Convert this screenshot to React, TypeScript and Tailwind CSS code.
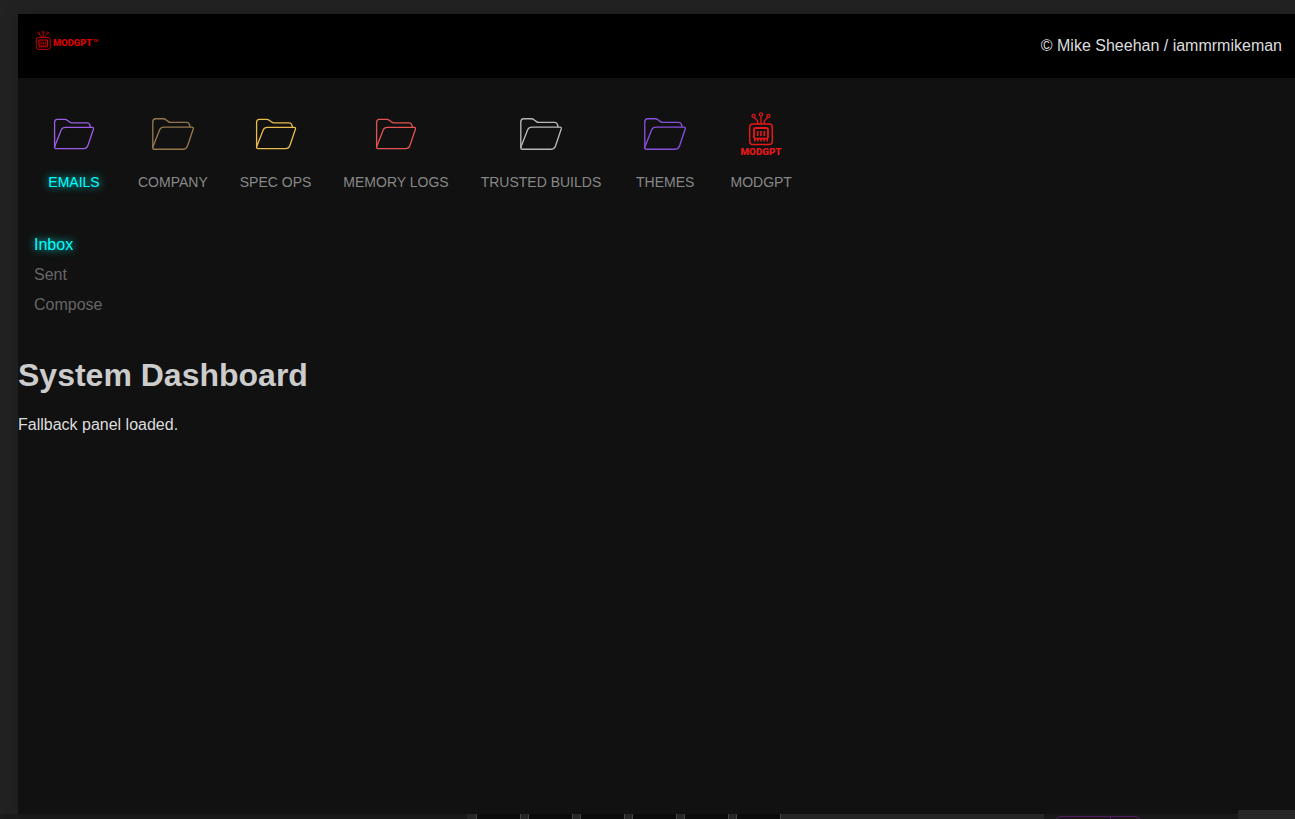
import { useState } from "react";

type IconProps = { className?: string };

function FolderIcon({ className = "" }: IconProps) {
  return (
    <svg
      viewBox="0 0 48 48"
      fill="none"
      stroke="currentColor"
      strokeWidth="1.3"
      strokeLinejoin="round"
      strokeLinecap="round"
      className={className}
      aria-hidden="true"
    >
      <path d="M4.6 37V12.4Q4.6 9.4 7.4 9.4H14.4Q16.2 9.4 17.6 10.6L19.6 12.1Q20.6 12.9 22 12.9H37Q39 12.9 39.7 14.6L40.4 17" />
      <path d="M15.4 17.4H42.2Q43.9 17.4 43.4 19.2L38 35.2Q36.8 38.6 33.4 38.6H6Q4.1 38.6 4.8 36.2L11.2 20Q12.2 17.4 15.4 17.4Z" />
    </svg>
  );
}

function RobotShape() {
  return (
    <g fill="none" stroke="currentColor">
      <rect x="1" y="13" width="22.6" height="20.6" rx="3" strokeWidth="1.5" />
      <path d="M12.3 13V5.5M9 13V10L5.7 6.6M15.6 13V10L18.9 6.6" strokeWidth="1.3" />
      <circle cx="12.3" cy="3.4" r="1.6" strokeWidth="1.2" />
      <circle cx="4.9" cy="4.9" r="1.6" strokeWidth="1.2" />
      <circle cx="19.7" cy="4.9" r="1.6" strokeWidth="1.2" />
      <rect x="5.3" y="17" width="14" height="10.6" rx="1.5" strokeWidth="1.8" />
      <path d="M9 20V25M12.3 20V25M15.6 20V25" strokeWidth="1.6" />
      <path d="M6 28V30.6M9.2 28V30.6M12.3 28V30.6M15.4 28V30.6M18.6 28V30.6" strokeWidth="1.5" />
    </g>
  );
}

function ModgptIcon({ className = "" }: IconProps) {
  return (
    <svg viewBox="0 0 48 48" className={className} aria-hidden="true">
      <g transform="translate(11.7 1)">
        <RobotShape />
      </g>
      <text
        x="24"
        y="45"
        textAnchor="middle"
        fill="currentColor"
        fontFamily="Roboto, sans-serif"
        fontWeight="900"
        fontSize="9.8"
      >
        MODGPT
      </text>
    </svg>
  );
}

function BrandLogo() {
  return (
    <svg viewBox="0 0 64 22" className="h-[22px] w-16 text-[#d80000]" role="img" aria-label="MODGPT">
      <g transform="translate(0.6 0.2) scale(0.62 0.57)">
        <RobotShape />
      </g>
      <text x="18" y="16" fill="currentColor" fontFamily="Roboto, sans-serif" fontWeight="900" fontSize="9.4">
        MODGPT
      </text>
      <text x="58" y="12" fill="currentColor" fontFamily="Roboto, sans-serif" fontWeight="700" fontSize="3.4">
        TM
      </text>
    </svg>
  );
}

const tabs = [
  { label: "EMAILS", icon: FolderIcon, tone: "size-12 text-[#9b5de5]" },
  { label: "COMPANY", icon: FolderIcon, tone: "size-[50px] text-[#94764f]" },
  { label: "SPEC OPS", icon: FolderIcon, tone: "size-12 text-[#e9bd4b]" },
  { label: "MEMORY LOGS", icon: FolderIcon, tone: "size-12 text-[#e55353]" },
  { label: "TRUSTED BUILDS", icon: FolderIcon, tone: "size-[50px] text-[#b8b8b8]" },
  { label: "THEMES", icon: FolderIcon, tone: "size-[50px] text-[#8750db]" },
  { label: "MODGPT", icon: ModgptIcon, tone: "size-12 text-[#e81818]" },
];

const folders = ["Inbox", "Sent", "Compose"];
const glow = "text-[#00ffff] [text-shadow:0_0_8px_#00ffff]";

export default function App() {
  const [tab, setTab] = useState("EMAILS");
  const [folder, setFolder] = useState("Inbox");

  return (
    <div className="relative flex min-h-screen flex-col overflow-hidden bg-[#222] pt-3.5 font-['Liberation_Sans',Arial,sans-serif] text-base text-[#ccc]">
      <div className="z-10 ml-[18px] flex flex-1 flex-col bg-[#111] shadow-[0_0_16px_rgba(0,0,0,0.2)]">
        <header className="flex h-16 items-center justify-between bg-black pr-[13px] pl-[17px]">
          <div className="pb-2.5">
            <BrandLogo />
          </div>
          <p className="leading-6 text-[#ddd]">© Mike Sheehan / iammrmikeman</p>
        </header>

        <nav className="flex flex-wrap gap-8 px-6 pt-[31px]" aria-label="Sections">
          {tabs.map(({ label, icon: Icon, tone }) => (
            <button
              key={label}
              type="button"
              onClick={() => setTab(label)}
              className={`flex min-w-16 cursor-pointer flex-col items-center gap-[13px] text-sm leading-5 ${
                tab === label ? glow : "text-[#888]"
              }`}
            >
              <span className="flex h-[50px] items-center">
                <Icon className={tone} />
              </span>
              {label}
            </button>
          ))}
        </nav>

        <ul className="mt-[41px] flex flex-col gap-1.5 px-4">
          {folders.map((name) => (
            <li key={name} className="h-6">
              <button
                type="button"
                onClick={() => setFolder(name)}
                className={`cursor-pointer leading-6 ${folder === name ? glow : "text-[#666]"}`}
              >
                {name}
              </button>
            </li>
          ))}
        </ul>

        <main className="pt-10">
          <h1 className="text-[32px] leading-9 font-bold">System Dashboard</h1>
          <p className="mt-5 leading-6 text-[#ddd]">Fallback panel loaded.</p>
        </main>
      </div>

      <div className="flex h-[5px] overflow-hidden bg-[#1b1b1b]" aria-hidden="true">
        <div className="w-[36.1%]" />
        <div className="flex w-[44.5%] gap-[7px] bg-[#292929] pl-[9px]">
          {tabs.slice(1).map(({ label }) => (
            <div key={label} className="w-[45px] border-x border-[#4a4a4a] bg-[#0c0c0c]" />
          ))}
        </div>
        <div className="mt-0.5 ml-3 flex h-3 w-[84px] rounded border border-[#5c1c68]">
          <div className="w-[54px] border-r border-[#5c1c68]" />
        </div>
      </div>
      <div className="absolute right-0 bottom-0 z-20 h-[9px] w-[57px] bg-[#272727]" aria-hidden="true" />
    </div>
  );
}
